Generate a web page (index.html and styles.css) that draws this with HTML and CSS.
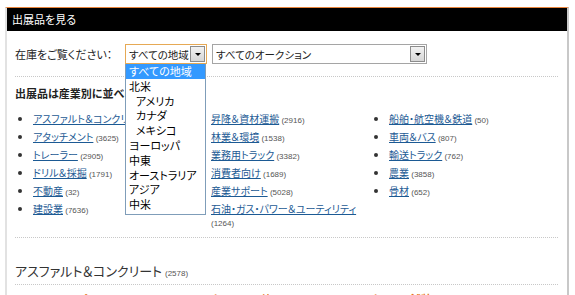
FILE: index.html
```html
<!DOCTYPE html>
<html lang="ja">
<head>
<meta charset="utf-8">
<link rel="stylesheet" href="styles.css">
</head>
<body>
<div class="panel">
  <div class="hdr">出展品を見る</div>
  <div class="body">
    <div class="filter">
      <span class="flabel">在庫をご覧ください：</span>
      <div class="selwrap">
        <div class="sel sel-focus"><span class="seltext">すべての地域</span><span class="arrow"><i></i></span></div>
        <ul class="dropdown">
          <li class="hi">すべての地域</li>
          <li>北米</li>
          <li class="ind">アメリカ</li>
          <li class="ind">カナダ</li>
          <li class="ind">メキシコ</li>
          <li>ヨーロッパ</li>
          <li>中東</li>
          <li>オーストラリア</li>
          <li>アジア</li>
          <li>中米</li>
        </ul>
      </div>
      <div class="sel sel-wide"><span class="seltext">すべてのオークション</span><span class="arrow"><i></i></span></div>
    </div>
    <div class="sep"></div>
    <h2 class="sub">出展品は産業別に並べられています</h2>
    <div class="cols">
      <ul class="col">
        <li><a href="#">アスファルト＆コンクリート</a> <span class="cnt">(2578)</span></li>
        <li><a href="#">アタッチメント</a> <span class="cnt">(3625)</span></li>
        <li><a href="#">トレーラー</a> <span class="cnt">(2905)</span></li>
        <li><a href="#">ドリル＆採掘</a> <span class="cnt">(1791)</span></li>
        <li><a href="#">不動産</a> <span class="cnt">(32)</span></li>
        <li><a href="#">建設業</a> <span class="cnt">(7636)</span></li>
      </ul>
      <ul class="col">
        <li><a href="#">昇降＆資材運搬</a> <span class="cnt">(2916)</span></li>
        <li><a href="#">林業＆環境</a> <span class="cnt">(1538)</span></li>
        <li><a href="#">業務用トラック</a> <span class="cnt">(3382)</span></li>
        <li><a href="#">消費者向け</a> <span class="cnt">(1689)</span></li>
        <li><a href="#">産業サポート</a> <span class="cnt">(5028)</span></li>
        <li><a href="#">石油・ガス・パワー＆ユーティリティ</a> <span class="cnt">(1264)</span></li>
      </ul>
      <ul class="col">
        <li><a href="#">船舶・航空機＆鉄道</a> <span class="cnt">(50)</span></li>
        <li><a href="#">車両＆バス</a> <span class="cnt">(807)</span></li>
        <li><a href="#">輸送トラック</a> <span class="cnt">(762)</span></li>
        <li><a href="#">農業</a> <span class="cnt">(3858)</span></li>
        <li><a href="#">骨材</a> <span class="cnt">(652)</span></li>
      </ul>
    </div>
    <div class="sep sep2"></div>
    <h3 class="sec">アスファルト＆コンクリート <span class="cnt">(2578)</span></h3>
    <div class="sep sep3"></div>
    <div class="orange">
      <span class="o1">アスファルトプラント (153)</span>
      <span class="o2">コンクリートの他 (211)</span>
      <span class="o3">コンクリート舗装 (87)</span>
    </div>
  </div>
</div>
</body>
</html>
```

FILE: styles.css
```css
html, body {
  margin: 0;
  padding: 0;
  background: #fff;
  overflow: hidden;
}
body {
  font-family: "Noto Sans CJK JP", "Noto Sans", sans-serif;
  font-feature-settings: "palt";
  color: #222;
}
.panel {
  margin: 7px 0 0 5px;
  width: 560px;
  height: 300px;
  border-top: 1px solid #e8843c;
  border-left: 2px solid #e2e2e2;
  border-right: 2px solid #c8c8c8;
}
.hdr {
  background: #000;
  color: #fff;
  height: 23px;
  line-height: 22px;
  font-size: 11px;
  padding-left: 5px;
}
.body {
  padding: 0 8px 0 8px;
}
.filter {
  display: flex;
  align-items: center;
  margin-top: 13px;
  height: 20px;
}
.flabel {
  font-size: 11px;
  width: 110px;
  color: #222;
}
.selwrap {
  position: relative;
  width: 82px;
  margin-right: 5px;
}
.sel {
  box-sizing: border-box;
  height: 20px;
  border: 1px solid #a5a5a5;
  display: flex;
  align-items: center;
  justify-content: space-between;
  background: #fff;
  font-size: 10.5px;
}
.sel-focus {
  width: 82px;
  border-color: #e6a955;
}
.sel-wide {
  width: 215px;
}
.seltext {
  padding-left: 3px;
  white-space: nowrap;
}
.arrow {
  box-sizing: border-box;
  width: 15px;
  height: 16px;
  margin-right: 1px;
  border: 1px solid #8c8c8c;
  background: linear-gradient(#f2f2f2, #d6d6d6);
  display: flex;
  align-items: center;
  justify-content: center;
}
.arrow i {
  width: 0;
  height: 0;
  border-left: 3px solid transparent;
  border-right: 3px solid transparent;
  border-top: 3px solid #000;
  margin-top: 1px;
}
.dropdown {
  position: absolute;
  top: 20px;
  left: 0;
  box-sizing: border-box;
  width: 81px;
  margin: 0;
  padding: 0 0 2px 0;
  list-style: none;
  background: #fff;
  border: 1px solid #7f9db9;
  border-top: none;
  z-index: 5;
  font-size: 11px;
}
.dropdown li {
  height: 14.8px;
  line-height: 14.8px;
  padding-left: 3px;
  color: #000;
  white-space: nowrap;
}
.dropdown li.hi {
  background: #3399ff;
  color: #fff;
}
.dropdown li.ind {
  padding-left: 10px;
}
.sep {
  border-top: 1px dotted #c8c8c8;
  margin-top: 12px;
  width: 543px;
}
.sub {
  margin: 9px 0 0 0;
  font-size: 11px;
  font-weight: bold;
  line-height: 14px;
  color: #222;
  white-space: nowrap;
}
.cols {
  display: grid;
  grid-template-columns: 178px 178px 178px;
  margin-top: 12px;
}
.col {
  margin: 0;
  padding: 0 0 0 18px;
  list-style: disc;
  font-size: 10px;
  line-height: 13px;
  color: #333;
}
.col li {
  line-height: 13px;
  margin-bottom: 5px;
}
.col li::marker {
  font-size: 10px;
  color: #333;
}
.col a {
  color: #1c5a94;
  text-decoration: underline;
  line-height: 13px;
}
.cnt {
  font-size: 8px;
  line-height: 8px;
  color: #555;
  font-family: "Liberation Sans", Arial, sans-serif;
}
.sep2 {
  margin-top: 4px;
}
.sec {
  margin: 24px 0 0 0;
  font-size: 13px;
  font-weight: normal;
  line-height: 18px;
  height: 18px;
  color: #333;
}
.sec .cnt {
  font-size: 8px;
}
.sep3 {
  margin-top: 4px;
}
.orange {
  display: flex;
  margin-top: 6px;
  font-size: 11px;
  font-weight: bold;
  color: #e87722;
  white-space: nowrap;
}
.o1 { padding-left: 3px; width: 172px; }
.o2 { width: 160px; }
```
